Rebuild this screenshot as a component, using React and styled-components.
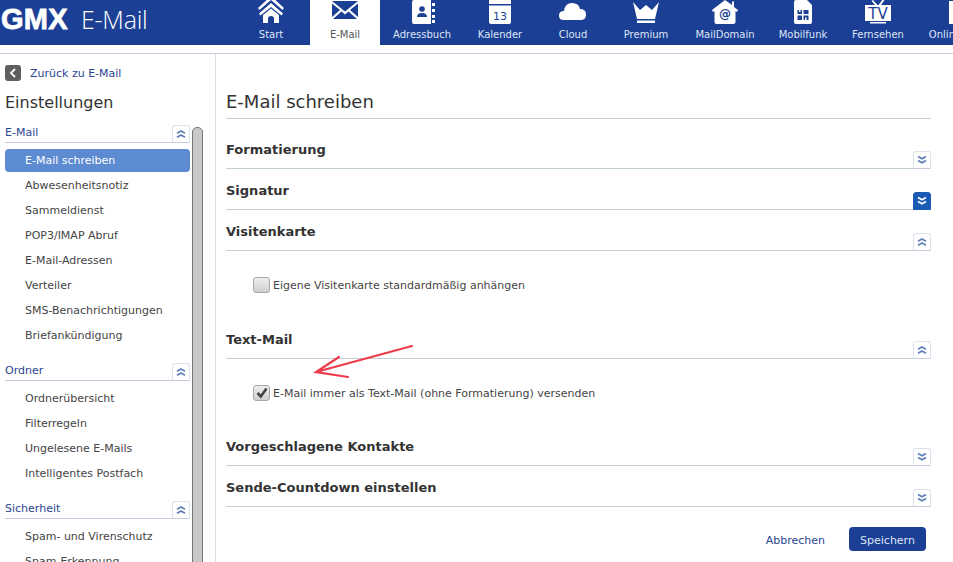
import React from "react";
import styled, { createGlobalStyle } from "styled-components";

const Global = createGlobalStyle`
  html, body { margin: 0; padding: 0; background: #fff; height: 100%; overflow: hidden; }
  body { font-family: "DejaVu Sans", Verdana, sans-serif; font-size: 11px; color: #333; }
  * { box-sizing: border-box; }
`;

const Page = styled.div`position: relative; width: 953px; height: 562px; overflow: hidden;`;
const Header = styled.header`display: flex; height: 45px; background: #1b3f95; color: #fff; overflow: hidden;`;
const Logo = styled.div`display: flex; align-items: center; flex: none; width: 236px; padding: 0 0 0 1px; height: 39px;`;
const LogoMark = styled.span`font: 700 29px/1 "Liberation Sans", Arial, sans-serif; letter-spacing: .3px; -webkit-text-stroke: .8px #fff; width: 80px; flex: none;`;
const LogoText = styled.span`font: 300 25px/1 "Open Sans", sans-serif; letter-spacing: -.25px;`;
const Nav = styled.nav`display: flex; gap: 4px; flex: none;`;
const NavItem = styled.div`
  display: flex; flex-direction: column; align-items: center; flex: none;
  width: ${p => p.$w}px; height: 45px; white-space: nowrap; font-size: 10px;
  background: ${p => (p.$active ? "#fff" : "transparent")};
  color: ${p => (p.$active ? "#555" : "#dfe6f5")};
  svg { display: block; flex: none; }
`;
const NavLabel = styled.span`margin-top: 2px; line-height: 13px;`;

const Body = styled.div`display: flex; height: 509px; margin-top: 8px; border-top: 1px solid #c9c9dc;`;
const Sidebar = styled.aside`width: 216px; flex: none; border-right: 1px solid #dcdce4; padding: 11px 0 0 5px; overflow: hidden; position: relative;`;
const Back = styled.div`display: flex; align-items: center; gap: 9px; height: 16px; color: #2a4591;`;
const BackIcon = styled.span`width: 16px; height: 16px; border-radius: 3px; background: #5f5f5f; display: flex; align-items: center; justify-content: center;`;
const SideTitle = styled.h2`font-size: 16px; font-weight: 400; line-height: 20px; margin: 12px 0 0; color: #333;`;
const SideColumns = styled.div`display: flex; gap: 2px; margin-top: 13px; align-items: flex-start;`;
const SideList = styled.div`width: 185px; flex: none;`;
const Scrollbar = styled.div`width: 11px; height: 460px; flex: none; margin-top: 1px; background: #c9c9c9; border: 1px solid #777; border-radius: 5px 5px 0 0;`;
const GroupHead = styled.div`
  display: flex; justify-content: space-between; align-items: flex-end; height: 17px;
  border-bottom: 1px solid #c4ccdc; color: #2a4591; line-height: 16px;
  margin-top: ${p => (p.$first ? 0 : 17)}px;
`;
const GroupLabel = styled.span`padding-bottom: 1px;`;
const Items = styled.ul`list-style: none; margin: 6px 0 0; padding: 0;`;
const Item = styled.li`
  height: 23px; line-height: 24px; margin-bottom: 2px; padding-left: 20px; border-radius: 4px;
  background: ${p => (p.$active ? "#5c8bd1" : "transparent")};
  color: ${p => (p.$active ? "#fff" : "#444")};
`;
const Toggle = styled.span`
  width: 18px; height: 18px; flex: none; display: flex; align-items: center; justify-content: center;
  margin-bottom: -1px; border: 1px solid ${p => (p.$on ? "#1c5bb5" : "#dbe2ee")}; border-bottom-color: ${p => (p.$on ? "#1c5bb5" : "#c4ccdc")};
  border-radius: 3px 3px 0 0; background: ${p => (p.$on ? "#1c5bb5" : "#fff")};
  color: ${p => (p.$on ? "#fff" : "#5f7fb8")};
`;

const Main = styled.main`flex: 1; padding: 34px 22px 0 10px; min-width: 0;`;
const Title = styled.h1`font-size: 18px; font-weight: 400; line-height: 28px; height: 31px; margin: 0 0 9px; border-bottom: 1px solid #c4d0d8; color: #333; padding-top: 0;`;
const SectionHead = styled.div`
  display: flex; justify-content: space-between; align-items: flex-end; height: 41px;
  border-bottom: 1px solid #c4d0d8;
`;
const SectionTitle = styled.h3`font-size: 13px; font-weight: 700; line-height: 16px; margin: 0; padding-bottom: 10px; color: #333;`;
const SectionBody = styled.div`height: ${p => p.$h}px; padding: 26px 0 0 27px;`;
const CheckRow = styled.label`display: flex; align-items: center; gap: 3px; height: 16px; color: #444;`;
const Box = styled.span`
  width: 17px; height: 16px; border: 1px solid #a9a9a9; border-radius: 3px; flex: none;
  background: linear-gradient(#eeeeee, #cfcfcf); display: flex; align-items: center; justify-content: center;
`;
const Footer = styled.div`display: flex; justify-content: flex-end; align-items: center; gap: 24px; padding: 20px 5px 0 0;`;
const CancelLink = styled.span`color: #2a4591; padding-top: 2px;`;
const SaveButton = styled.button`
  width: 77px; height: 24px; border: 0; border-radius: 4px; background: #1b3f95; color: #dfe6f5;
  font: 11px "DejaVu Sans", sans-serif; padding: 2px 0 0;
`;
const Annotation = styled.svg`position: absolute; left: 310px; top: 340px; pointer-events: none;`;

const Chev = ({ down }) => (
  <svg width="10" height="10" viewBox="0 0 10 10" fill="none" stroke="currentColor" strokeWidth="1.7">
    {down
      ? <path d="M1 1.5 5 3.8 9 1.5M1 5.5 5 7.8 9 5.5" />
      : <path d="M1 4.3 5 2 9 4.3M1 8.3 5 6 9 8.3" />}
  </svg>
);
const Tg = ({ down, on }) => <Toggle $on={on}><Chev down={down} /></Toggle>;

const I = ({ children }) => <svg width="30" height="26" viewBox="0 0 30 26" fill="#fff">{children}</svg>;
const icons = {
  home: <I><path d="M15-4 28 8l-1.500 2L15 0 3.500 10 2 8Z" /><path d="M15 3 27 13.500 25.500 15.500 15 7 4.500 15.500 3 13.500Z" /><path d="M15 8.500 23 15V23H18V18.500Q18 16 15 16T12 18.500V23H7V15Z" /></I>,
  mail: <I><path d="M2 1H28L15 11.500Z" /><path d="M2 3.500 10 10 2 17ZM28 3.500V17L20 10ZM11.500 11.500 15 14.500 18.500 11.500 27 19H3Z" /></I>,
  book: <I><path d="M5 2Q5 0 7 0H24V24H7Q5 24 5 22Z" /><path d="M25 3h3v3h-3ZM25 9h3v3h-3ZM25 15h3v3h-3ZM25 20h3v3h-3Z" /><circle cx="15" cy="9" r="2.800" fill="#1b3f95" /><path d="M10 17Q10 13 15 13T20 17Z" fill="#1b3f95" /></I>,
  cal: <I><path d="M4 0H26V22Q26 24 24 24H6Q4 24 4 22Z" /><path d="M4 4h22v1.500H4Z" fill="#1b3f95" /><text x="15" y="20" textAnchor="middle" fontSize="11" fill="#1b3f95" fontFamily="DejaVu Sans">13</text></I>,
  cloud: <I><path d="M6 20Q1 20 1 15.500T6 11Q7 3 14 3T22 9Q28 9 28 14.500T22.500 20Z" /></I>,
  crown: <I><path d="M2 2 9 10 15 5 21 10 28 2 24 19H6Z" /><path d="M6 20.500H24V23H6Z" /></I>,
  at: <I><path d="M15 0 22 5V1.500H24V7L28 10 27 12 25.500 11V22Q25.500 24 23.500 24H6.500Q4.500 24 4.500 22V11L3 12 2 10Z" /><text x="15" y="18" textAnchor="middle" fontSize="12" fill="#1b3f95" fontFamily="DejaVu Sans" fontWeight="700">@</text></I>,
  sim: <I><path d="M6 2Q6 0 8 0H19L24 5V22Q24 24 22 24H8Q6 24 6 22Z" /><path d="M9.500 10H14V14H9.500ZM15.500 10H20.500V14H15.500ZM9.500 15.500H14V20H9.500ZM15.500 15.500H20.500V20H15.500Z" fill="#1b3f95" /><path d="M11 10h1.500v2H11ZM17 17.500h1.500V20H17Z" /></I>,
  tv: <I><path d="M2 5H28V21H2Z" /><path d="M10 0 14.500 5H12L8.500 1ZM20 -1 21.500 0 18 5H15.500ZM7 22H23V23.500H7Z" /><text x="15" y="19" textAnchor="middle" fontSize="15" fill="#1b3f95" fontFamily="DejaVu Sans">TV</text></I>,
  online: <I><path d="M19 1H30V24H19Z" /></I>,
};

const navItems = [
  ["Start", "home", 70], ["E-Mail", "mail", 70], ["Adressbuch", "book", 76], ["Kalender", "cal", 72],
  ["Cloud", "cloud", 66], ["Premium", "crown", 72], ["MailDomain", "at", 78], ["Mobilfunk", "sim", 70],
  ["Fernsehen", "tv", 72], ["Online", "online", 54],
];

const groups = [
  ["E-Mail", ["E-Mail schreiben", "Abwesenheitsnotiz", "Sammeldienst", "POP3/IMAP Abruf", "E-Mail-Adressen", "Verteiler", "SMS-Benachrichtigungen", "Briefankündigung"]],
  ["Ordner", ["Ordnerübersicht", "Filterregeln", "Ungelesene E-Mails", "Intelligentes Postfach"]],
  ["Sicherheit", ["Spam- und Virenschutz", "Spam-Erkennung"]],
];

const Check = () => (
  <svg width="14" height="14" viewBox="0 0 14 14" fill="none" stroke="#444" strokeWidth="2.600">
    <path d="M2.500 7 5.800 10.500 11.500 2.500" />
  </svg>
);

export default function App() {
  return (
    <Page>
      <Global />
      <Header>
        <Logo><LogoMark>GMX</LogoMark><LogoText>E-Mail</LogoText></Logo>
        <Nav>
          {navItems.map(([label, ic, w]) => (
            <NavItem key={label} $w={w} $active={label === "E-Mail"}>
              {label === "E-Mail"
                ? <svg width="30" height="26" viewBox="0 0 30 26" fill="#1b3f95">{icons.mail.props.children}</svg>
                : icons[ic]}
              <NavLabel>{label}</NavLabel>
            </NavItem>
          ))}
        </Nav>
      </Header>
      <Body>
        <Sidebar>
          <Back>
            <BackIcon>
              <svg width="8" height="10" viewBox="0 0 8 10" fill="none" stroke="#fff" strokeWidth="1.800"><path d="M6 1 2 5 6 9" /></svg>
            </BackIcon>
            Zurück zu E-Mail
          </Back>
          <SideTitle>Einstellungen</SideTitle>
          <SideColumns>
            <SideList>
              {groups.map(([name, items], gi) => (
                <div key={name}>
                  <GroupHead $first={gi === 0}>
                    <GroupLabel>{name}</GroupLabel>
                    <Tg />
                  </GroupHead>
                  <Items>
                    {items.map((t, i) => <Item key={t} $active={gi === 0 && i === 0}>{t}</Item>)}
                  </Items>
                </div>
              ))}
            </SideList>
            <Scrollbar />
          </SideColumns>
        </Sidebar>
        <Main>
          <Title>E-Mail schreiben</Title>
          <SectionHead><SectionTitle>Formatierung</SectionTitle><Tg down /></SectionHead>
          <SectionHead><SectionTitle>Signatur</SectionTitle><Tg down on /></SectionHead>
          <SectionHead><SectionTitle>Visitenkarte</SectionTitle><Tg /></SectionHead>
          <SectionBody $h={67}>
            <CheckRow><Box />Eigene Visitenkarte standardmäßig anhängen</CheckRow>
          </SectionBody>
          <SectionHead><SectionTitle>Text-Mail</SectionTitle><Tg /></SectionHead>
          <SectionBody $h={66}>
            <CheckRow><Box><Check /></Box>E-Mail immer als Text-Mail (ohne Formatierung) versenden</CheckRow>
          </SectionBody>
          <SectionHead><SectionTitle>Vorgeschlagene Kontakte</SectionTitle><Tg down /></SectionHead>
          <SectionHead><SectionTitle>Sende-Countdown einstellen</SectionTitle><Tg down /></SectionHead>
          <Footer>
            <CancelLink>Abbrechen</CancelLink>
            <SaveButton>Speichern</SaveButton>
          </Footer>
        </Main>
      </Body>
      <Annotation width="110" height="45" viewBox="310 340 110 45" fill="none" stroke="#ee3b4b" strokeWidth="2.200" strokeLinecap="round">
        <path d="M412 346 316 372M339 357 316 372 348 377" />
      </Annotation>
    </Page>
  );
}
